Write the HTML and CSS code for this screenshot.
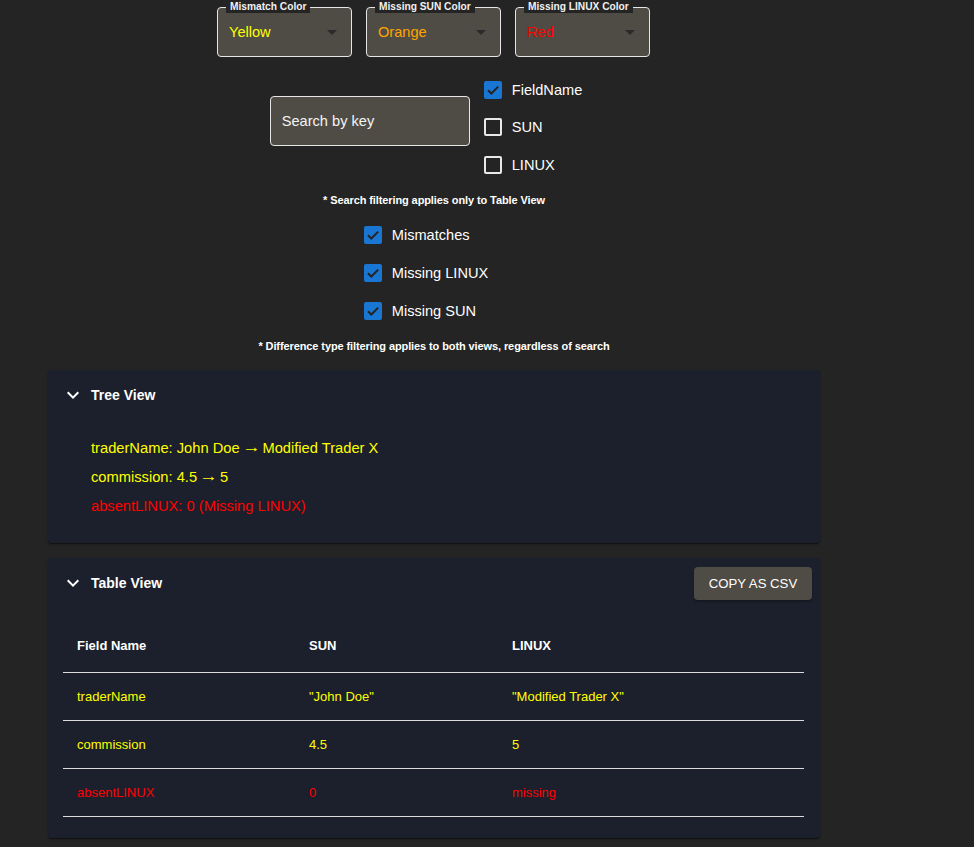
FILE: index.html
```html
<!DOCTYPE html>
<html lang="en">
<head>
<meta charset="utf-8">
<title>Diff Viewer</title>
<link rel="stylesheet" href="styles.css">
</head>
<body>
<div class="app">
  <div class="selects">
    <div class="select">
      <span class="select-label">Mismatch Color</span>
      <span class="select-value yellow">Yellow</span>
      <span class="select-arrow"></span>
    </div>
    <div class="select">
      <span class="select-label">Missing SUN Color</span>
      <span class="select-value orange">Orange</span>
      <span class="select-arrow"></span>
    </div>
    <div class="select">
      <span class="select-label">Missing LINUX Color</span>
      <span class="select-value red">Red</span>
      <span class="select-arrow"></span>
    </div>
  </div>

  <div class="search-row">
    <div class="search-box">Search by key</div>
    <div class="check-group">
      <label class="check-item"><span class="box checked"><svg viewBox="0 0 18 18" width="18" height="18"><path d="M4 9.2l3.3 3.3L14.2 5.6" fill="none" stroke="#242424" stroke-width="2"/></svg></span>FieldName</label>
      <label class="check-item"><span class="box"></span>SUN</label>
      <label class="check-item"><span class="box"></span>LINUX</label>
    </div>
  </div>
  <p class="note note-search">* Search filtering applies only to Table View</p>

  <div class="check-group diff-group">
    <label class="check-item"><span class="box checked"><svg viewBox="0 0 18 18" width="18" height="18"><path d="M4 9.2l3.3 3.3L14.2 5.6" fill="none" stroke="#242424" stroke-width="2"/></svg></span>Mismatches</label>
    <label class="check-item"><span class="box checked"><svg viewBox="0 0 18 18" width="18" height="18"><path d="M4 9.2l3.3 3.3L14.2 5.6" fill="none" stroke="#242424" stroke-width="2"/></svg></span>Missing LINUX</label>
    <label class="check-item"><span class="box checked"><svg viewBox="0 0 18 18" width="18" height="18"><path d="M4 9.2l3.3 3.3L14.2 5.6" fill="none" stroke="#242424" stroke-width="2"/></svg></span>Missing SUN</label>
  </div>
  <p class="note note-diff">* Difference type filtering applies to both views, regardless of search</p>

  <section class="card tree-card">
    <div class="card-header">
      <svg class="chevron" viewBox="0 0 24 24" width="24" height="24"><path d="M16.59 8.59L12 13.17 7.41 8.59 6 10l6 6 6-6z" fill="#fff"/></svg>
      <span class="card-title">Tree View</span>
    </div>
    <div class="tree-body">
      <div class="tree-line yellow">traderName: John Doe <span class="arrow">→</span> Modified Trader X</div>
      <div class="tree-line yellow">commission: 4.5 <span class="arrow">→</span> 5</div>
      <div class="tree-line red">absentLINUX: 0 (Missing LINUX)</div>
    </div>
  </section>

  <section class="card table-card">
    <div class="card-header">
      <svg class="chevron" viewBox="0 0 24 24" width="24" height="24"><path d="M16.59 8.59L12 13.17 7.41 8.59 6 10l6 6 6-6z" fill="#fff"/></svg>
      <span class="card-title">Table View</span>
      <button class="csv-btn">COPY AS CSV</button>
    </div>
    <div class="table">
      <div class="row head">
        <div class="cell">Field Name</div>
        <div class="cell">SUN</div>
        <div class="cell">LINUX</div>
      </div>
      <div class="row yellow">
        <div class="cell">traderName</div>
        <div class="cell">"John Doe"</div>
        <div class="cell">"Modified Trader X"</div>
      </div>
      <div class="row yellow">
        <div class="cell">commission</div>
        <div class="cell">4.5</div>
        <div class="cell">5</div>
      </div>
      <div class="row red">
        <div class="cell">absentLINUX</div>
        <div class="cell">0</div>
        <div class="cell">missing</div>
      </div>
    </div>
  </section>
</div>
</body>
</html>
```

FILE: styles.css
```css
* { box-sizing: border-box; }

html, body {
  margin: 0;
  background: #242424;
  height: 100%;
}

body {
  font-family: "Liberation Sans", Arial, sans-serif;
  color: #fff;
  font-size: 14.6px;
}

.app {
  width: 868px;
  display: flex;
  flex-direction: column;
  align-items: center;
}

.yellow { color: #ffff00; }
.orange { color: #ffa500; }
.red { color: #ff0000; }

/* selects */
.selects {
  display: flex;
  gap: 14px;
  margin-top: 7px;
  margin-right: 1px;
}

.select {
  position: relative;
  width: 135px;
  height: 50px;
  border: 1px solid #e6e6e6;
  border-radius: 4px;
  background: #4f4c45;
  display: flex;
  align-items: center;
  padding-left: 11px;
}

.select-label {
  position: absolute;
  top: -7px;
  left: 8px;
  padding: 0 4px;
  background: #242424;
  font-size: 10.2px;
  font-weight: bold;
  line-height: 12px;
  color: #f0f0f0;
}

.select-value {
  font-size: 14.6px;
}

.select-arrow {
  position: absolute;
  right: 14px;
  top: 22px;
  width: 0;
  height: 0;
  border-left: 5px solid transparent;
  border-right: 5px solid transparent;
  border-top: 5px solid #2a2a2a;
}

/* search */
.search-row {
  display: flex;
  align-items: flex-start;
  gap: 14px;
  margin-top: 14px;
  padding-right: 16px;
}

.search-box {
  margin-top: 25px;
  width: 200px;
  height: 50px;
  border: 1px solid #e6e6e6;
  border-radius: 4px;
  background: #4f4c45;
  display: flex;
  align-items: center;
  padding-left: 11px;
  font-size: 14.6px;
  color: #f4f4f4;
}

.check-group {
  display: flex;
  flex-direction: column;
}

.check-item {
  display: flex;
  align-items: center;
  gap: 10px;
  height: 37.5px;
  font-size: 14.6px;
  color: #fff;
}

.diff-group .check-item {
  height: 38px;
}

.box {
  width: 18px;
  height: 18px;
  border: 2px solid #e8e8e8;
  border-radius: 2px;
  display: flex;
  align-items: center;
  justify-content: center;
  flex: none;
}

.box.checked {
  border: none;
  background: #1976d2;
}

.box svg { display: block; }

.note {
  margin: 0;
  font-size: 11px;
  font-weight: bold;
  line-height: 14px;
  letter-spacing: -0.1px;
}

.note-search {
  margin-top: 9.5px;
}

.diff-group {
  margin-top: 9px;
  padding-right: 16px;
}

.note-diff {
  margin-top: 9px;
}

/* cards */
.card {
  width: 772px;
  background: #1b202c;
  border-radius: 4px;
  box-shadow: 0 2px 1px -1px rgba(0,0,0,0.3), 0 1px 1px 0 rgba(0,0,0,0.2), 0 1px 3px 0 rgba(0,0,0,0.2);
}

.tree-card {
  margin-top: 17px;
  height: 173px;
}

.card-header {
  height: 50px;
  display: flex;
  align-items: center;
  padding: 0 8px 0 16px;
}

.chevron {
  flex: none;
  margin-left: -3px;
}

.card-title {
  margin-left: 6px;
  font-size: 14px;
  font-weight: bold;
}

.tree-body {
  padding: 14px 0 0 43px;
}

.tree-line {
  font-size: 14.7px;
  line-height: 29px;
}

.arrow {
  display: inline-block;
  transform: translateY(-1px) scaleX(1.25);
}

.table-card {
  margin-top: 15px;
  height: 280px;
}

.csv-btn {
  margin-left: auto;
  height: 33px;
  width: 118px;
  border: none;
  border-radius: 4px;
  background: #4f4c45;
  color: #fff;
  font-family: "Liberation Sans", Arial, sans-serif;
  font-size: 13.2px;
  box-shadow: 0 2px 2px rgba(0,0,0,0.25);
}

.table {
  margin: 11px 16px 0 15px;
}

.row {
  display: grid;
  grid-template-columns: 232px 203px 1fr;
  height: 48px;
  align-items: center;
  border-bottom: 1px solid #dcdcdc;
  font-size: 13px;
}

.row.head {
  height: 54px;
  font-weight: bold;
  color: #fff;
}

.cell {
  padding-left: 14px;
}
```
